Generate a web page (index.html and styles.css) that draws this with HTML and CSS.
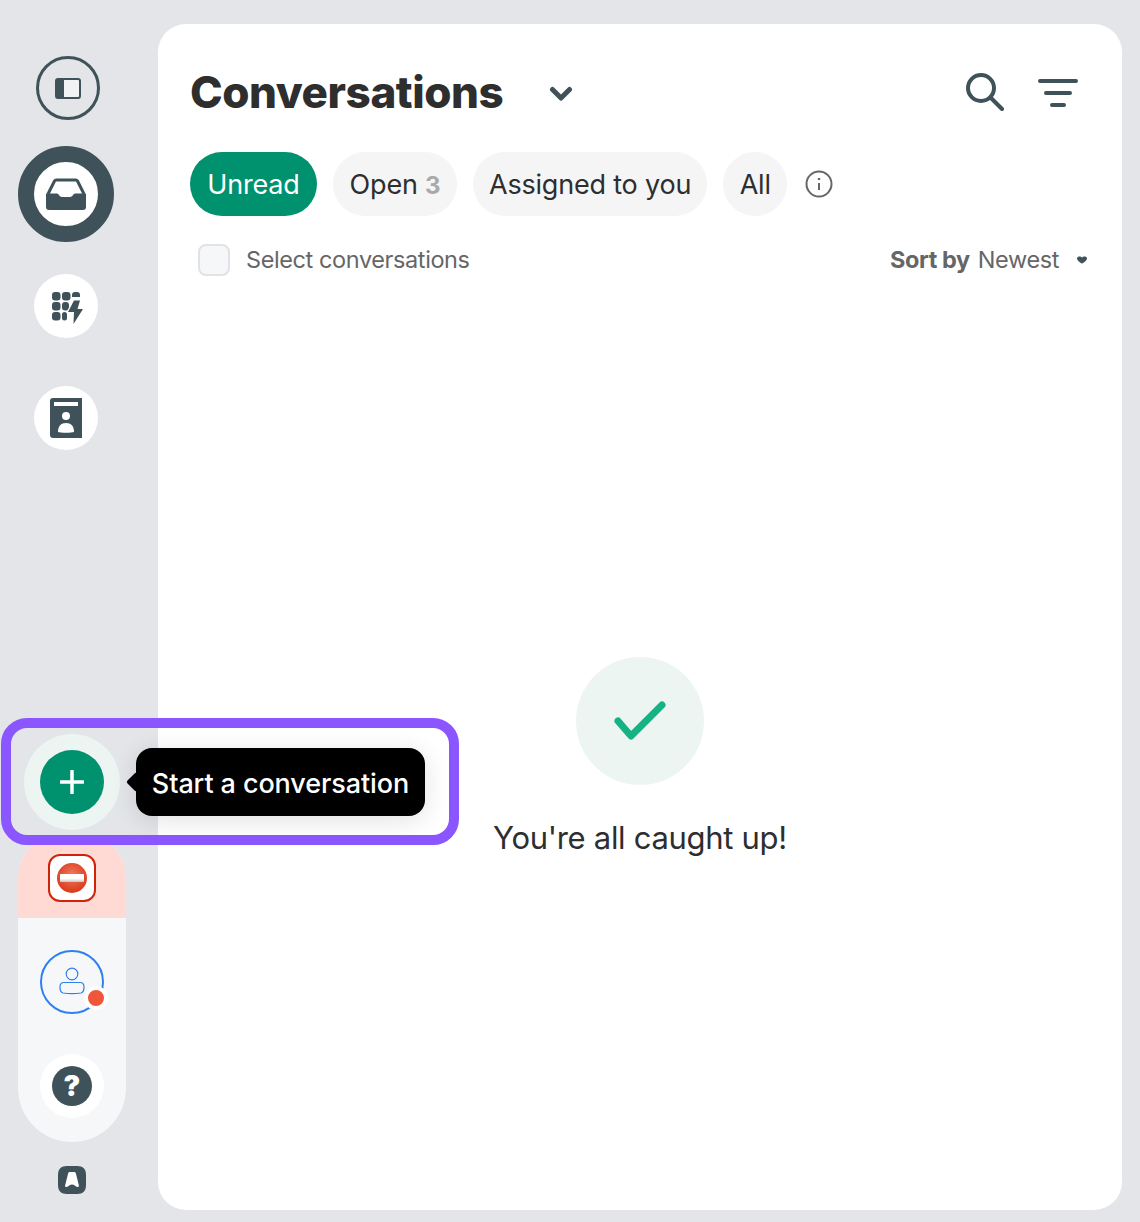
FILE: index.html
```html
<!DOCTYPE html>
<html lang="en">
<head>
<meta charset="utf-8">
<title>Conversations</title>
<link rel="stylesheet" href="styles.css">
</head>
<body>
<div class="app">
  <aside class="sidebar">
    <nav class="nav-top">
      <button class="round toggle" aria-label="Toggle sidebar">
        <svg width="26" height="21" viewBox="0 0 26 21"><rect x="1" y="1" width="24" height="19" rx="2" fill="#f1f2f3" stroke="#3f5259" stroke-width="2"/><path d="M2 2h7v17H2z" fill="#3f5259"/></svg>
      </button>
      <button class="round inbox" aria-label="Inbox">
        <svg width="40" height="32" viewBox="0 0 40 32"><path d="M2 16 8.500 3a2 2 0 0 1 1.800-1h19.400a2 2 0 0 1 1.800 1L38 16" fill="none" stroke="#3f5259" stroke-width="3"/><path d="M0 15.500h11c1.500 0 2.500 3.500 5 3.500h8c2.500 0 3.500-3.500 5-3.500h11V29a3 3 0 0 1-3 3H3a3 3 0 0 1-3-3z" fill="#3f5259"/></svg>
      </button>
      <button class="round white apps" aria-label="Apps">
        <svg class="apps-icon" width="32" height="32" viewBox="0 0 32 32" fill="#3f5259"><rect x="0" y="0" width="8.500" height="8.500" rx="3"/><rect x="10" y="0" width="8.500" height="8.500" rx="3"/><path d="M20 3a3 3 0 0 1 3-3h2a3 3 0 0 1 3 3v2h-8z"/><rect x="0" y="10" width="8.500" height="8.500" rx="3"/><rect x="10" y="10" width="7" height="8.500" rx="3"/><rect x="0" y="20" width="8.500" height="8.500" rx="3"/><rect x="10" y="20" width="5" height="8.500" rx="2.500"/><path d="M22 8.500 16 20h6l-.5 12L31 17h-5.500L28 8.500z" stroke="#fff" stroke-width="2.500" stroke-linejoin="round" paint-order="stroke"/></svg>
      </button>
      <button class="round white contacts" aria-label="Contacts">
        <svg width="32" height="40" viewBox="0 0 32 40"><path d="M3 0h29v40H3a3 3 0 0 1-3-3V3a3 3 0 0 1 3-3z" fill="#3f5259"/><rect x="4" y="4" width="24" height="4" fill="#fff"/><circle cx="16" cy="18" r="4" fill="#fff"/><path d="M8 34c0-6 3-9 8-9s8 3 8 9c-2 1-14 1-16 0z" fill="#fff"/></svg>
      </button>
    </nav>
    <div class="nav-bottom">
      <div class="new-wrap">
        <button class="new-halo" aria-label="Start a conversation">
          <span class="new-btn">
            <svg width="24" height="24" viewBox="0 0 24 24"><path d="M12 1v22M1 12h22" stroke="#fff" stroke-width="3.500" stroke-linecap="round"/></svg>
          </span>
        </button>
        <div class="tooltip">Start a conversation</div>
        <div class="highlight"></div>
      </div>
      <div class="panel">
        <div class="panel-alert">
          <span class="stop"><span class="stop-disc"><span class="stop-bar"></span></span></span>
        </div>
        <div class="panel-body">
          <button class="user" aria-label="Profile">
            <svg width="28" height="30" viewBox="0 0 28 30" fill="none" stroke="#2f80ed" stroke-width="1.200"><circle cx="14" cy="7" r="5.800"/><path d="M6 15.500h16c2.500 0 4 1.800 4 4.500 0 3-1 5.500-3 6-6 .8-12 .8-18 0-2-.5-3-3-3-6 0-2.700 1.500-4.500 4-4.500z"/></svg>
            <span class="user-dot"></span>
          </button>
          <button class="round white help" aria-label="Help"><span class="help-disc">?</span></button>
        </div>
      </div>
      <div class="logo" aria-label="Logo">
        <svg width="28" height="28" viewBox="0 0 28 28"><path d="M9 0h10c6 0 9 3 9 9v10c0 6-3 9-9 9H9c-6 0-9-3-9-9V9c0-6 3-9 9-9z" fill="#3f5259"/><path d="M11.800 6h4.400c1 0 1.500.6 1.700 1.500l3 12c.2 1-.5 1.700-1.500 1.500-1.800-.5-3.300-2.500-5.400-2.500S10.400 20.500 8.600 21c-1 .2-1.700-.5-1.500-1.500l3-12c.2-.9.700-1.500 1.700-1.500z" fill="#fff"/></svg>
      </div>
    </div>
  </aside>

  <main class="main">
    <header class="header">
      <div class="title-wrap">
        <h1 class="title">Conversations</h1>
        <svg class="chevron" width="24" height="16" viewBox="0 0 24 16"><path d="M3.500 3.500 12 12l8.500-8.500" fill="none" stroke="#3f5259" stroke-width="5" stroke-linecap="round" stroke-linejoin="round"/></svg>
      </div>
      <div class="header-actions">
        <svg width="38" height="38" viewBox="0 0 38 38" fill="none" stroke="#3f5259" stroke-width="4" stroke-linecap="round"><circle cx="15" cy="15" r="13"/><path d="M25 25 36 36"/></svg>
        <svg class="filter" width="40" height="28" viewBox="0 0 40 28" fill="none" stroke="#3f5259" stroke-width="4" stroke-linecap="round"><path d="M2 2h36M8 14h24M14 26h12"/></svg>
      </div>
    </header>
    <div class="tabs">
      <button class="tab tab-active">Unread</button>
      <button class="tab tab-open">Open <span class="count">3</span></button>
      <button class="tab">Assigned to you</button>
      <button class="tab tab-all">All</button>
      <svg class="info" width="28" height="28" viewBox="0 0 28 28" fill="none" stroke="#666" stroke-width="2"><circle cx="14" cy="14" r="12.500"/><path d="M14 13v7" stroke-width="2"/><path d="M14 8v2" stroke-width="2.400"/></svg>
    </div>
    <div class="select-row">
      <label class="select-label"><span class="checkbox"></span>Select conversations</label>
      <div class="sort"><b class="sort-by">Sort by</b> <span>Newest</span>
        <svg width="12" height="8" viewBox="0 0 12 8"><path d="M1 2.500C1 1 2.500.5 3.500.5c1 0 2 .5 2.500 1 .5-.5 1.500-1 2.500-1 1 0 2.500.5 2.500 2 0 2-3.500 4.500-5 5-1.500-.5-5-3-5-5z" fill="#3f5259"/></svg>
      </div>
    </div>
    <section class="empty">
      <div class="check-disc">
        <svg width="52" height="40" viewBox="0 0 52 40"><path d="M4 20 17 35 48 4" fill="none" stroke="#16b286" stroke-width="7" stroke-linecap="round" stroke-linejoin="round"/></svg>
      </div>
      <p class="empty-text">You're all caught up!</p>
    </section>
  </main>
</div>
</body>
</html>
```
FILE: styles.css
```css
* { box-sizing: border-box; }
html, body { margin: 0; height: 100%; }
body {
  background: #e3e5e9;
  font-family: "Inter", "Lato", sans-serif;
  color: #2e2e2e;
  overflow: hidden;
}
button { font: inherit; color: inherit; border: 0; padding: 0; background: none; }
.app { display: flex; height: 1222px; }

.sidebar {
  width: 158px;
  flex: none;
  padding: 56px 0 28px 18px;
  display: flex;
  flex-direction: column;
  justify-content: space-between;
}
.nav-top { width: 96px; display: flex; flex-direction: column; align-items: center; }
.round { display: flex; align-items: center; justify-content: center; border-radius: 50%; flex: none; }
.toggle { width: 64px; height: 64px; border: 3px solid #3f5259; margin-left: 4px; }
.inbox { width: 96px; height: 96px; background: #fff; border: 16px solid #3f5259; margin-top: 26px; }
.white { width: 64px; height: 64px; background: #fff; }
.apps { margin-top: 32px; }
.apps-icon { margin: 4px 0 0 4px; }
.contacts { margin-top: 48px; }

.nav-bottom { width: 108px; display: flex; flex-direction: column; align-items: center; }
.new-wrap { position: relative; width: 96px; height: 96px; margin-bottom: 5px; z-index: 2; }
.new-halo { width: 96px; height: 96px; border-radius: 50%; background: #ecf5f2; display: flex; align-items: center; justify-content: center; }
.new-btn { width: 64px; height: 64px; border-radius: 50%; background: #00916e; display: flex; align-items: center; justify-content: center; }
.tooltip {
  position: absolute;
  left: 112px;
  top: 14px;
  width: 289px;
  height: 68px;
  border-radius: 16px;
  background: #000;
  color: #fff;
  font-size: 27px;
  font-weight: 500;
  letter-spacing: -.1px;
  line-height: 71px;
  text-align: center;
  white-space: nowrap;
  box-shadow: 0 4px 24px rgba(0, 0, 0, .12);
}
.tooltip::before {
  content: "";
  position: absolute;
  left: -7px;
  top: 27px;
  width: 14px;
  height: 14px;
  background: #000;
  transform: rotate(45deg);
  border-radius: 2px;
}
.highlight {
  position: absolute;
  left: -23px;
  top: -16px;
  width: 458px;
  height: 127px;
  border: 10px solid #8b55ff;
  border-radius: 26px;
  pointer-events: none;
}

.panel { width: 108px; background: #f6f7f9; border-radius: 42px 42px 54px 54px; overflow: hidden; }
.panel-alert { height: 83px; background: #ffd9d3; display: flex; justify-content: center; padding-top: 19px; }
.stop { width: 48px; height: 48px; border: 2px solid #d0240a; border-radius: 12px; background: #fff; display: flex; align-items: center; justify-content: center; }
.stop-disc { width: 30px; height: 30px; border-radius: 50%; background: radial-gradient(circle at 50% 40%, #f27a5e, #d9391a 75%); display: flex; align-items: center; justify-content: center; }
.stop-bar { width: 24px; height: 8px; background: linear-gradient(#fff 55%, #c5c5c5); }
.panel-body { height: 224px; padding-top: 32px; display: flex; flex-direction: column; align-items: center; }
.user { position: relative; width: 64px; height: 64px; border: 2px solid #2f80ed; border-radius: 50%; display: flex; align-items: center; justify-content: center; }
.user-dot { position: absolute; left: 42px; top: 34px; width: 24px; height: 24px; border-radius: 50%; background: #f1563a; border: 4px solid #fff; }
.help { margin-top: 40px; }
.help-disc { width: 40px; height: 40px; border-radius: 50%; background: #3f5259; color: #fff; font-size: 28px; font-weight: 900; line-height: 40px; text-align: center; }
.logo { width: 28px; height: 28px; margin-top: 24px; line-height: 0; }

.main {
  flex: none;
  width: 964px;
  height: 1186px;
  margin-top: 24px;
  background: #fff;
  border-radius: 28px;
  display: flex;
  flex-direction: column;
  padding: 0 32px;
}
.header { height: 128px; flex: none; display: flex; justify-content: space-between; align-items: center; padding: 8px 12px 0 0; }
.title-wrap { display: flex; align-items: center; }
.title { margin: 0; font-size: 44px; font-weight: 800; letter-spacing: -.45px; line-height: 56px; color: #2e2e2e; }
.chevron { margin-left: 46px; margin-top: 4px; }
.header-actions { display: flex; align-items: center; gap: 34px; }
.filter { margin-top: 2px; }

.tabs { display: flex; align-items: center; gap: 16px; height: 64px; flex: none; }
.tab { height: 64px; padding: 0 16px; border-radius: 32px; background: #f5f5f5; font-size: 27px; letter-spacing: -.2px; line-height: 66px; white-space: nowrap; }
.tab-active { background: #00916e; color: #fff; min-width: 127px; }
.tab-open { min-width: 124px; }
.tab-all { min-width: 64px; }
.count { color: #a7a9ac; font-weight: 700; font-size: 24px; }
.info { margin-left: 2px; }

.select-row { display: flex; justify-content: space-between; align-items: center; height: 32px; margin-top: 28px; padding: 0 2px 0 8px; flex: none; font-size: 23.5px; letter-spacing: -.4px; line-height: 30px; color: #666; }
.select-label { display: flex; align-items: center; gap: 16px; }
.checkbox { width: 32px; height: 32px; border: 2px solid #e0e2e5; border-radius: 8px; background: #f6f7f8; }
.sort { display: flex; align-items: center; gap: 8px; }
.sort svg { margin-left: 9px; }
.sort-by { font-weight: 700; }

.empty { flex: 1; display: flex; flex-direction: column; align-items: center; justify-content: center; padding-top: 30px; }
.check-disc { width: 128px; height: 128px; border-radius: 50%; background: #ecf5f2; display: flex; align-items: center; justify-content: center; }
.empty-text { margin: 32px 0 0; font-size: 31px; letter-spacing: -.3px; line-height: 42px; color: #2e2e2e; }
```
